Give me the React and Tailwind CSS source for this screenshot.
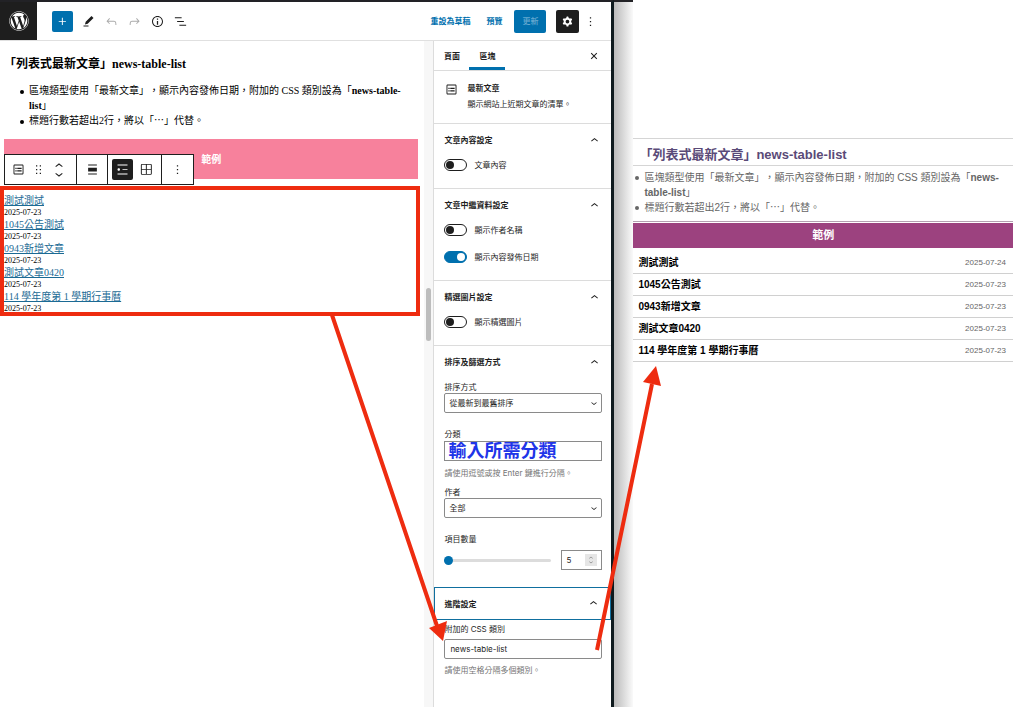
import React from "react";
import { FaWordpress } from "react-icons/fa6";

const icons = {
  plus: "M11 12.5V17.5H12.5V12.5H17.5V11H12.5V6H11V11H6V12.5H11Z",
  edit: "m20 6.5-3.2-3.2-9.3 9.2-1.2 4.4 4.4-1.2L20 6.5ZM12 18.5H4V20h8v-1.5Z",
  undo: "M18.3 11.7c-.6-.6-1.4-.9-2.3-.9H6.7l2.9-3.3-1.1-1-4.5 5L8.5 16l1-1-2.7-2.7H16c.5 0 .9.2 1.3.5 1 1 1 3.4 1 4.5v.3h1.5v-.2c0-1.5 0-4.3-1.5-5.7z",
  redo: "M15.6 6.5l-1.1 1 2.9 3.3H8c-.9 0-1.7.3-2.3.9-1.4 1.5-1.4 4.2-1.4 5.6v.2h1.5v-.3c0-1.1 0-3.5 1-4.5.3-.3.7-.5 1.3-.5h9.2L14.5 15l1.1 1.1 4.6-4.6-4.6-5z",
  info: "M12 3.2c-4.8 0-8.8 3.9-8.8 8.8 0 4.8 3.9 8.8 8.8 8.8 4.8 0 8.8-3.9 8.8-8.8 0-4.8-4-8.8-8.8-8.8zm0 16c-4 0-7.2-3.3-7.2-7.2C4.8 8 8 4.8 12 4.8s7.2 3.3 7.2 7.2c0 4-3.2 7.2-7.2 7.2zM11 17h2v-6h-2v6zm0-8h2V7h-2v2z",
  listView: "M13.8 5.2H3v1.5h10.8V5.2zm-3.6 12v1.5H21v-1.5H10.2zm7.2-6H6.6v1.5h10.8v-1.5z",
  postList: "M18 4H6c-1.1 0-2 .9-2 2v12c0 1.1.9 2 2 2h12c1.1 0 2-.9 2-2V6c0-1.1-.9-2-2-2zm.5 14c0 .3-.2.5-.5.5H6c-.3 0-.5-.2-.5-.5V6c0-.3.2-.5.5-.5h12c.3 0 .5.2.5.5v12zM7 11h2V9H7v2zm0 4h2v-2H7v2zm3-4h7V9h-7v2zm0 4h7v-2h-7v2z",
  drag: "M8 7h2V5H8v2zm0 6h2v-2H8v2zm0 6h2v-2H8v2zm6-14v2h2V5h-2zm0 8h2v-2h-2v2zm0 6h2v-2h-2v2z",
  up: "M6.5 12.4L12 8l5.5 4.4-.9 1.2L12 10l-4.5 3.6-1-1.2z",
  down: "M17.5 11.6L12 16l-5.5-4.4.9-1.2L12 14l4.5-3.6 1 1.2z",
  align: "M19 5.5H5V4h14v1.5ZM19 20H5v-1.5h14V20ZM5 9h14v6H5V9Z",
  list: "M4 4v1.5h16V4H4zm8 8.5h8V11h-8v1.5zM4 20h16v-1.5H4V20zm4-8c0-1.1-.9-2-2-2s-2 .9-2 2 .9 2 2 2 2-.9 2-2z",
  grid: "m3 5c0-1.10457.89543-2 2-2h13.5c1.1046 0 2 .89543 2 2v13.5c0 1.1046-.8954 2-2 2h-13.5c-1.10457 0-2-.8954-2-2zm2-.5h6v6.5h-6.5v-6c0-.27614.22386-.5.5-.5zm-.5 8v6c0 .2761.22386.5.5.5h6v-6.5zm8 0v6.5h6c.2761 0 .5-.2239.5-.5v-6zm0-8v6.5h6.5v-6c0-.27614-.2239-.5-.5-.5z",
  more: "M13 19h-2v-2h2v2zm0-6h-2v-2h2v2zm0-6h-2V5h2v2z",
  cog: "M10.289 4.836A1 1 0 0111.275 4h1.306a1 1 0 01.987.836l.244 1.466c.787.26 1.503.679 2.108 1.218l1.393-.522a1 1 0 011.216.437l.653 1.13a1 1 0 01-.23 1.273l-1.148.944a6.025 6.025 0 010 2.435l1.149.946a1 1 0 01.23 1.272l-.653 1.13a1 1 0 01-1.216.437l-1.394-.522c-.605.54-1.32.958-2.108 1.218l-.244 1.466a1 1 0 01-.987.836h-1.306a1 1 0 01-.986-.836l-.244-1.466a5.995 5.995 0 01-2.108-1.218l-1.394.522a1 1 0 01-1.217-.436l-.653-1.131a1 1 0 01.23-1.272l1.149-.946a6.026 6.026 0 010-2.435l-1.148-.944a1 1 0 01-.23-1.272l.653-1.131a1 1 0 011.217-.437l1.393.522a5.994 5.994 0 012.108-1.218l.244-1.466zM14.929 12a3 3 0 11-6 0 3 3 0 016 0z",
  close: "M12 13.06l3.712 3.713 1.061-1.06L13.061 12l3.712-3.712-1.06-1.06L12 10.938 8.288 7.227l-1.061 1.06L10.939 12l-3.712 3.712 1.06 1.061L12 13.061z",
};

const posts = [
  { title: "測試測試", date: "2025-07-23", published: "2025-07-24" },
  { title: "1045公告測試", date: "2025-07-23", published: "2025-07-23" },
  { title: "0943新增文章", date: "2025-07-23", published: "2025-07-23" },
  { title: "測試文章0420", date: "2025-07-23", published: "2025-07-23" },
  { title: "114 學年度第 1 學期行事曆", date: "2025-07-23", published: "2025-07-23" },
];

function Icon({ name, className = "size-[15px]" }) {
  return (
    <svg viewBox="0 0 24 24" fill="currentColor" fillRule="evenodd" aria-hidden="true" className={`shrink-0 ${className}`}>
      <path d={icons[name]} />
    </svg>
  );
}

function IconButton({ name, label, className = "", iconClass }) {
  return (
    <button type="button" aria-label={label} className={`flex items-center justify-center ${className}`}>
      <Icon name={name} className={iconClass} />
    </button>
  );
}

function Header() {
  return (
    <header className="flex h-[38px] items-center pr-[13px] text-[#1e1e1e]">
      <a href="#" aria-label="WordPress" className="flex h-[38px] w-[37px] items-center justify-center bg-[#1e1e1e] text-white">
        <FaWordpress className="size-5" />
      </a>
      <IconButton name="plus" label="新增區塊" className="ml-[15px] size-[21px] rounded-xs bg-[#0070ae] text-white" />
      <div className="ml-2 flex gap-2">
        <IconButton name="edit" label="工具" />
        <IconButton name="undo" label="復原" className="text-[#aaa]" />
        <IconButton name="redo" label="重做" className="text-[#aaa]" />
        <IconButton name="info" label="詳細資料" />
        <IconButton name="listView" label="清單檢視" />
      </div>
      <div className="ml-auto flex items-center text-[8px] font-bold text-[#0070ae]">
        <button type="button" className="mr-4">重設為草稿</button>
        <button type="button" className="mr-3">預覽</button>
        <button type="button" className="h-[23px] w-8 rounded-xs bg-[#0070ae] font-medium text-[#66a9d0]">更新</button>
        <IconButton name="cog" label="設定" className="ml-2.5 size-[23px] rounded-xs bg-[#1e1e1e] text-white" />
        <IconButton name="more" label="選項" className="ml-1 text-[#1e1e1e]" />
      </div>
    </header>
  );
}

function BlockToolbar() {
  return (
    <div role="toolbar" className="absolute top-[15px] left-0 flex h-[31px] divide-x divide-[#1e1e1e] border border-[#1e1e1e] bg-white text-[#1e1e1e]">
      <div className="flex w-[72px] items-center gap-[5px] pl-1.5">
        <IconButton name="postList" label="最新文章" />
        <IconButton name="drag" label="拖曳" />
        <div className="flex flex-col">
          <button type="button" aria-label="上移" className="h-2.5 overflow-hidden">
            <Icon name="up" className="-mt-0.5 size-4" />
          </button>
          <button type="button" aria-label="下移" className="h-2.5 overflow-hidden">
            <Icon name="down" className="-mt-1 size-4" />
          </button>
        </div>
      </div>
      <div className="flex w-[31px] items-center justify-center">
        <IconButton name="align" label="對齊" />
      </div>
      <div className="flex w-[54px] items-center justify-center gap-[3px]">
        <IconButton name="list" label="清單檢視" className="size-[21px] rounded-xs bg-[#1e1e1e] text-white" />
        <IconButton name="grid" label="格狀檢視" className="size-[21px]" />
      </div>
      <div className="flex w-[31px] items-center justify-center">
        <IconButton name="more" label="選項" />
      </div>
    </div>
  );
}

function Notes({ className }) {
  return (
    <ul className={`leading-[15px] ${className}`}>
      <li className="before:mr-[5px] before:-ml-[9px] before:inline-block before:size-1 before:rounded-full before:bg-current before:align-middle">
        區塊類型使用「最新文章」，顯示內容發佈日期，附加的 CSS 類別設為「<strong>news-table-list</strong>」
      </li>
      <li className="before:mr-[5px] before:-ml-[9px] before:inline-block before:size-1 before:rounded-full before:bg-current before:align-middle">
        標題行數若超出2行，將以「⋯」代替。
      </li>
    </ul>
  );
}

function Canvas() {
  return (
    <main className="min-w-0 flex-1 pr-1 font-['Liberation_Serif','Noto_Sans_CJK_TC',serif] text-[10px] text-black">
      <div className="px-1 pt-[15px]">
        <h3 className="text-[12px] leading-4 font-bold">「列表式最新文章」news-table-list</h3>
        <Notes className="mt-[11px] pl-[25px]" />
        <div className="relative mt-[11px] mr-[-2px] flex h-10 items-center justify-center bg-[#f7819c] font-bold text-white">
          範例
          <BlockToolbar />
        </div>
      </div>
      <ul className="mt-[7px] h-[130px] border-4 border-[#ee2c10] pt-1">
        {posts.map((post) => (
          <li key={post.title}>
            <a href="#" className="block leading-[14px] text-[#1b6a94] underline">{post.title}</a>
            <time className="block text-[8px] leading-[10px]">{post.date}</time>
          </li>
        ))}
      </ul>
    </main>
  );
}

function Panel({ title, focused, children }) {
  return (
    <section className={focused ? "" : "border-t border-[#dcdcdc] pb-[17px]"}>
      <h2>
        <button
          type="button"
          aria-expanded="true"
          className={`flex w-full items-center justify-between pr-[9px] font-bold ${
            focused ? "h-[33px] border border-[#0f6f9f] pl-[9px]" : "h-8 pl-2.5"
          }`}
        >
          {title}
          <Icon name="up" />
        </button>
      </h2>
      <div className="pt-[3px] pr-[9px] pl-2.5">{children}</div>
    </section>
  );
}

function Toggle({ id, label, checked }) {
  return (
    <div className="flex h-3 items-center gap-[7px]">
      <input
        id={id}
        type="checkbox"
        defaultChecked={checked}
        className="flex h-3 w-[23px] appearance-none items-center rounded-full border border-[#1e1e1e] px-px before:size-2 before:rounded-full before:bg-[#1e1e1e] checked:justify-end checked:border-[#0070ae] checked:bg-[#0070ae] checked:before:bg-white"
      />
      <label htmlFor={id}>{label}</label>
    </div>
  );
}

function SelectField({ id, label, value, className = "" }) {
  return (
    <div className={className}>
      <label htmlFor={id} className="block">{label}</label>
      <div className="relative">
        <select id={id} className="block h-5 w-full appearance-none rounded-xs border border-[#8a8a8a] bg-white pl-1">
          <option>{value}</option>
        </select>
        <Icon name="down" className="pointer-events-none absolute top-1 right-0.5 size-3" />
      </div>
    </div>
  );
}

function Sidebar() {
  return (
    <aside className="w-[178px] shrink-0 border-l border-[#dcdcdc] bg-white text-[8px] leading-3 text-[#1e1e1e]">
      <div className="flex h-[29px] items-stretch pr-[9px] font-bold">
        <button type="button" className="w-[35px]">頁面</button>
        <button type="button" className="w-9 border-b-[3px] border-[#0070ae] pt-[3px]">區塊</button>
        <IconButton name="close" label="關閉設定" className="ml-auto" iconClass="size-4" />
      </div>
      <div className="flex h-[53px] gap-2 border-t border-[#dcdcdc] pt-[11px] pl-2.5">
        <Icon name="postList" />
        <div>
          <h2 className="mb-1 font-bold">最新文章</h2>
          <p>顯示網站上近期文章的清單。</p>
        </div>
      </div>
      <Panel title="文章內容設定">
        <Toggle id="content" label="文章內容" />
      </Panel>
      <Panel title="文章中繼資料設定">
        <div className="flex flex-col gap-[15px]">
          <Toggle id="author-name" label="顯示作者名稱" />
          <Toggle id="post-date" label="顯示內容發佈日期" checked />
        </div>
      </Panel>
      <Panel title="精選圖片設定">
        <Toggle id="featured" label="顯示精選圖片" />
      </Panel>
      <Panel title="排序及篩選方式">
        <SelectField id="order" label="排序方式" value="從最新到最舊排序" />
        <label htmlFor="category" className="mt-[15px] mb-px block">分類</label>
        <input
          id="category"
          type="text"
          defaultValue="輸入所需分類"
          className="block h-5 w-full border border-[#8a8a8a] px-[3px] pb-1 text-[18px] leading-[18px] font-bold text-[#1f35e8]"
        />
        <p className="mt-1.5 text-[#757575]">請使用逗號或按 Enter 鍵進行分隔。</p>
        <SelectField id="author" label="作者" value="全部" className="mt-[7px]" />
        <label htmlFor="count" className="mt-[15px] block">項目數量</label>
        <div className="mt-[5px] flex items-center gap-2.5">
          <input
            type="range"
            aria-label="項目數量"
            min={5}
            max={100}
            defaultValue={5}
            className="h-[9px] min-w-0 flex-1 appearance-none bg-transparent [&::-webkit-slider-runnable-track]:h-[3px] [&::-webkit-slider-runnable-track]:rounded-full [&::-webkit-slider-runnable-track]:bg-[#dcdcdc] [&::-webkit-slider-thumb]:-mt-[3px] [&::-webkit-slider-thumb]:size-[9px] [&::-webkit-slider-thumb]:appearance-none [&::-webkit-slider-thumb]:rounded-full [&::-webkit-slider-thumb]:bg-[#0070ae]"
          />
          <div className="flex h-5 w-[41px] items-center border border-[#8a8a8a] pr-1 pl-1">
            <input id="count" type="text" inputMode="numeric" defaultValue="5" className="w-full min-w-0" />
            <span className="flex h-3 w-3 shrink-0 flex-col items-center bg-[#e6e6e6] text-[#555]">
              <Icon name="up" className="-mb-1 size-2" />
              <Icon name="down" className="size-2" />
            </span>
          </div>
        </div>
      </Panel>
      <Panel title="進階設定" focused>
        <label htmlFor="css-class" className="mb-1 block">附加的 CSS 類別</label>
        <input
          id="css-class"
          type="text"
          defaultValue="news-table-list"
          className="block h-5 w-full rounded-xs border border-[#8a8a8a] px-[5px]"
        />
        <p className="mt-[5px] text-[#757575]">請使用空格分隔多個類別。</p>
      </Panel>
    </aside>
  );
}

function Preview() {
  return (
    <article className="min-w-0 flex-1 pt-[138px] pr-[11px] font-['Liberation_Sans','Noto_Sans_CJK_TC',sans-serif] text-[10px] text-[#666]">
      <h3 className="border-y border-[#d5d5d5] pt-[7px] pb-0.5 pl-[6px] text-[13px] leading-[17px] font-bold text-[#5a4a78]">
        「列表式最新文章」news-table-list
      </h3>
      <Notes className="mt-1 pl-[11px]" />
      <h4 className="mt-1.5 border-t border-[#b3a0b0] pt-px">
        <span className="block bg-[#9c427f] text-center text-[11px] leading-[25px] font-bold text-white">範例</span>
      </h4>
      <ul className="mt-1">
        {posts.map((post) => (
          <li key={post.title} className="flex h-[22px] items-center justify-between border-b border-[#d0d0d0] pr-[7px] pl-[5px]">
            <a href="#" className="font-bold text-black">{post.title}</a>
            <time className="text-[8px]">{post.published}</time>
          </li>
        ))}
      </ul>
    </article>
  );
}

function Arrows() {
  return (
    <svg className="pointer-events-none absolute top-0 left-0" width="700" height="700" fill="#ee2c10" stroke="#ee2c10" aria-hidden="true">
      <path d="M332 315 437 626M597 650 652 384" strokeWidth="4" />
      <path d="M429 628 447 621 443 641ZM643 382 661 386 656 366Z" stroke="none" />
    </svg>
  );
}

export default function App() {
  return (
    <div
      lang="zh-Hant"
      className="relative flex min-h-screen bg-white font-[Inter,'Noto_Sans_CJK_TC',sans-serif] [text-spacing-trim:space-all]"
    >
      <div className="flex w-3/5 flex-col border-t-2 border-r-[3px] border-t-[#222226] border-r-[#0e1a1e]">
        <Header />
        <div className="flex flex-1 border-t border-[#e0e0e0]">
          <Canvas />
          <div className="w-[9px] shrink-0 bg-[#f7f7f7] pt-[247px] pl-0.5">
            <div className="h-[53px] w-[5px] rounded-full bg-[#bdbdbd]" />
          </div>
          <Sidebar />
        </div>
      </div>
      <div className="w-[19px] shrink-0 border-t-2 border-[#222226] bg-linear-to-r from-[#bababa] to-[#fafafa]" />
      <Preview />
      <Arrows />
    </div>
  );
}
